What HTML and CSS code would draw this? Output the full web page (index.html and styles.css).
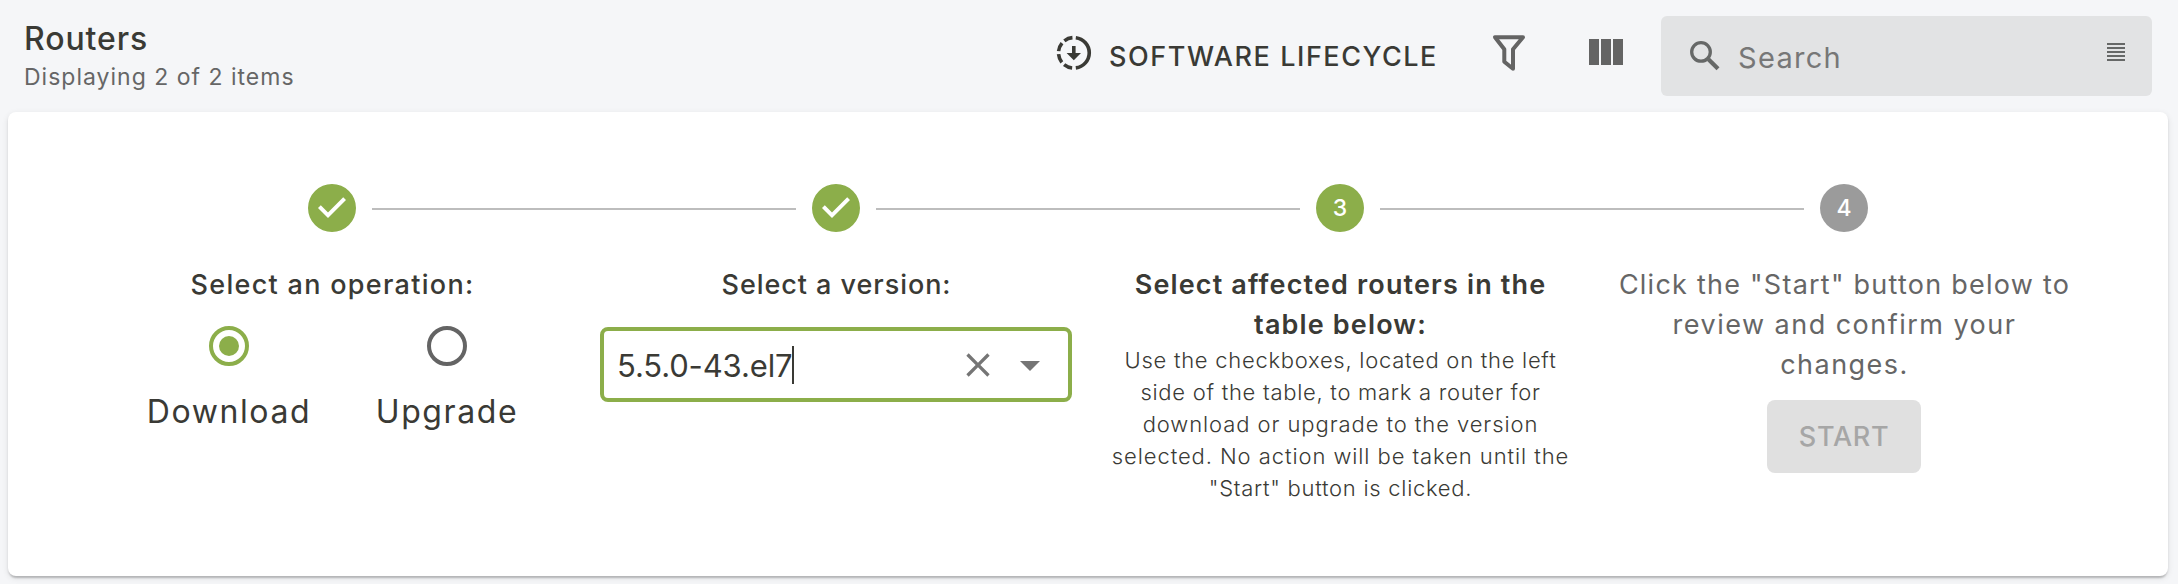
FILE: index.html
```html
<!DOCTYPE html>
<html lang="en">
<head>
<meta charset="utf-8">
<title>Routers</title>
<link rel="stylesheet" href="styles.css">
</head>
<body>
<header class="toolbar">
  <div class="heading">
    <h1 class="title">Routers</h1>
    <p class="subtitle">Displaying 2 of 2 items</p>
  </div>
  <button class="lifecycle">
    <svg class="lifecycle-icon" width="40" height="40" viewBox="0 0 40 40">
      <g fill="none" stroke="currentColor" stroke-width="3.6">
        <path d="M21.8 4.7A15.2 15.2 0 0 1 21.8 34.9"/>
        <path d="M19.7 35A15.2 15.2 0 0 1 19.7 4.6" stroke-dasharray="8.7 3.24" stroke-dashoffset="-1.62"/>
      </g>
      <path fill="currentColor" d="M18 13h3.6v7H27l-7.2 7.3L12.6 20H18z"/>
    </svg>
    <span class="lifecycle-label">SOFTWARE LIFECYCLE</span>
  </button>
  <button class="icon-button filter" aria-label="Filter">
    <svg width="50" height="50" viewBox="0 0 50 50"><path d="M10 9.2H38L28 21.3V40.8L19.3 33.7V21.3Z" fill="none" stroke="currentColor" stroke-width="4" stroke-linejoin="round"/></svg>
  </button>
  <button class="icon-button columns" aria-label="Columns">
    <svg width="36" height="26" viewBox="0 0 36 26"><path fill="currentColor" d="M1 0h10v26H1zM13 0h10v26H13zM25 0h10v26H25z"/></svg>
  </button>
  <div class="search">
    <svg width="44" height="44" viewBox="0 0 44 44" fill="none" stroke="currentColor"><circle cx="19" cy="17.9" r="9.3" stroke-width="3.3"/><path d="M26.4 25.3L36 34.8" stroke-width="4.2"/></svg>
    <span class="search-text">Search</span>
    <svg class="density" width="18" height="18" viewBox="0 0 18 18"><path fill="currentColor" d="M0 0h18v2H0zM0 4h18v2H0zM0 8h18v2H0zM0 12h18v2H0zM0 16h18v2H0z"/></svg>
  </div>
</header>
<main class="card">
  <div class="track">
    <svg class="done" width="48" height="48" viewBox="0 0 24 24"><path fill="currentColor" d="M12 0a12 12 0 1 0 0 24 12 12 0 0 0 0-24zm-2 17l-5-5 1.4-1.4 3.6 3.6 7.6-7.6L19 8l-9 9z"/></svg>
    <i class="connector"></i>
    <svg class="done" width="48" height="48" viewBox="0 0 24 24"><path fill="currentColor" d="M12 0a12 12 0 1 0 0 24 12 12 0 0 0 0-24zm-2 17l-5-5 1.4-1.4 3.6 3.6 7.6-7.6L19 8l-9 9z"/></svg>
    <i class="connector"></i>
    <span class="badge active">3</span>
    <i class="connector"></i>
    <span class="badge">4</span>
  </div>
  <div class="steps">
    <section class="step">
      <h2 class="label spaced">Select an operation:</h2>
      <div class="options">
        <label class="option"><span class="radio checked"></span><span>Download</span></label>
        <label class="option"><span class="radio"></span><span>Upgrade</span></label>
      </div>
    </section>
    <section class="step">
      <h2 class="label">Select a version:</h2>
      <div class="select">
        <span class="value">5.5.0-43.el7</span><i class="caret"></i>
        <svg class="clear" width="40" height="40" viewBox="0 0 24 24"><path fill="currentColor" d="M19 6.41L17.59 5 12 10.59 6.41 5 5 6.41 10.59 12 5 17.59 6.41 19 12 13.41 17.59 19 19 17.59 13.41 12z"/></svg>
        <svg class="arrow" width="48" height="48" viewBox="0 0 24 24"><path fill="currentColor" d="M7 10l5 5 5-5z"/></svg>
      </div>
    </section>
    <section class="step">
      <h2 class="label strong">Select affected routers in the<br>table below:</h2>
      <p class="help">
        <span class="line">Use the checkboxes, located on the left</span>
        <span class="line">side of the table, to mark a router for</span>
        <span class="line wide">download or upgrade to the version</span>
        <span class="line wide">selected. No action will be taken until the</span>
        <span class="line">"Start" button is clicked.</span>
      </p>
    </section>
    <section class="step">
      <h2 class="label pending">Click the "Start" button below to<br><span class="loose">review and confirm your</span><br><span class="loose">changes.</span></h2>
      <button class="start" disabled>START</button>
    </section>
  </div>
</main>
</body>
</html>
```
FILE: styles.css
```css
* { box-sizing: border-box; }
body {
  margin: 0;
  height: 584px;
  overflow: hidden;
  background: #f5f6f8;
  color: #3a3a35;
  font-family: Inter, "Liberation Sans", sans-serif;
}
h1, h2, p { margin: 0; }
svg { display: block; flex: none; }
button { border: 0; padding: 0; background: none; font: inherit; color: inherit; }

.toolbar {
  display: flex;
  align-items: center;
  height: 112px;
  padding: 0 26px 0 24px;
  white-space: nowrap;
}
.heading { align-self: flex-start; padding-top: 20px; margin-right: auto; }
.title { font-size: 32px; line-height: 37px; font-weight: 500; letter-spacing: 0.9px; }
.subtitle { font-size: 23px; line-height: 40px; letter-spacing: 1px; color: #666; }
.lifecycle {
  display: flex;
  align-items: center;
  width: 386px;
  gap: 15px;
}
.lifecycle-icon { margin-bottom: 6px; }
.lifecycle-label { padding-top: 1px; font-size: 27px; line-height: 40px; font-weight: 500; letter-spacing: 1.55px; }
.icon-button { color: #646464; }
.filter { margin: 0 53px 6px 45px; }
.columns { margin: 0 37px 8px 0; }
.search {
  display: flex;
  align-items: center;
  width: 491px;
  height: 80px;
  padding: 0 27px 0 21px;
  border-radius: 6px;
  background: #e2e3e4;
  color: #666867;
}
.search-text {
  flex: 1;
  padding: 3px 0 0 12px;
  font-size: 29px;
  line-height: 40px;
  letter-spacing: 1.3px;
  color: #777;
}
.density { margin-bottom: 8px; }

.card {
  width: 2160px;
  height: 464px;
  margin-left: 8px;
  padding: 72px 72px 0;
  border-radius: 8px;
  background: #fff;
  box-shadow: 0 4px 2px -2px rgba(0,0,0,.12), 0 2px 2px rgba(0,0,0,.1), 0 2px 6px rgba(0,0,0,.1);
}
.track { display: flex; justify-content: center; align-items: center; gap: 16px; }
.done { color: #8cae4a; }
.connector { width: 424px; height: 2px; margin-top: 2px; background: #bdbdbd; }
.badge {
  width: 48px;
  height: 48px;
  border-radius: 50%;
  background: #9b9b9b;
  color: #fff;
  font-size: 23px;
  line-height: 48px;
  font-weight: 500;
  text-align: center;
}
.badge.active { background: #8cae4a; }

.steps { display: grid; grid-template-columns: repeat(4, 504px); margin-top: 32px; }
.step { padding: 0 16px; text-align: center; white-space: nowrap; }
.label { padding: 1px 0 0 1px; margin-bottom: -1px; font-size: 27px; line-height: 40px; font-weight: 500; letter-spacing: 0.95px; }
.label.spaced { letter-spacing: 1.3px; }
.label.strong { font-weight: 600; letter-spacing: 1.15px; }
.label.pending { font-weight: 400; letter-spacing: 1.24px; color: #666; }
.label .loose { letter-spacing: 1.48px; }

.options { display: flex; justify-content: center; padding: 22px 0 0 12px; }
.option {
  display: flex;
  flex-direction: column;
  align-items: center;
  width: 218px;
  gap: 26px;
  font-size: 32px;
  line-height: 40px;
  letter-spacing: 1.6px;
}
.radio {
  display: grid;
  place-items: center;
  width: 40px;
  height: 40px;
  border: 4px solid #646464;
  border-radius: 50%;
}
.radio.checked { border-color: #8cae4a; }
.radio.checked::after { content: ""; width: 20px; height: 20px; border-radius: 50%; background: #8cae4a; }

.select {
  display: flex;
  align-items: center;
  height: 75px;
  margin-top: 23px;
  padding: 0 14px 0 13px;
  border: 4px solid #8cae4a;
  border-radius: 8px;
}
.value { padding-top: 2px; font-size: 31px; line-height: 40px; letter-spacing: -0.13px; }
.caret { width: 2px; height: 38px; background: #3a3a35; }
.clear { margin: 1px 8px 0 auto; color: #757575; }
.arrow { margin-top: 1px; color: #757575; }

.help { padding-left: 1px; font-size: 22px; line-height: 32px; font-weight: 300; letter-spacing: 0.72px; }
.line { display: block; }
.line.wide { letter-spacing: 0.92px; }

.start {
  width: 154px;
  height: 73px;
  margin-top: 16px;
  border-radius: 8px;
  background: #e0e0e0;
  color: #a6a6a6;
  font-size: 27px;
  font-weight: 500;
  letter-spacing: 0.7px;
}
```
